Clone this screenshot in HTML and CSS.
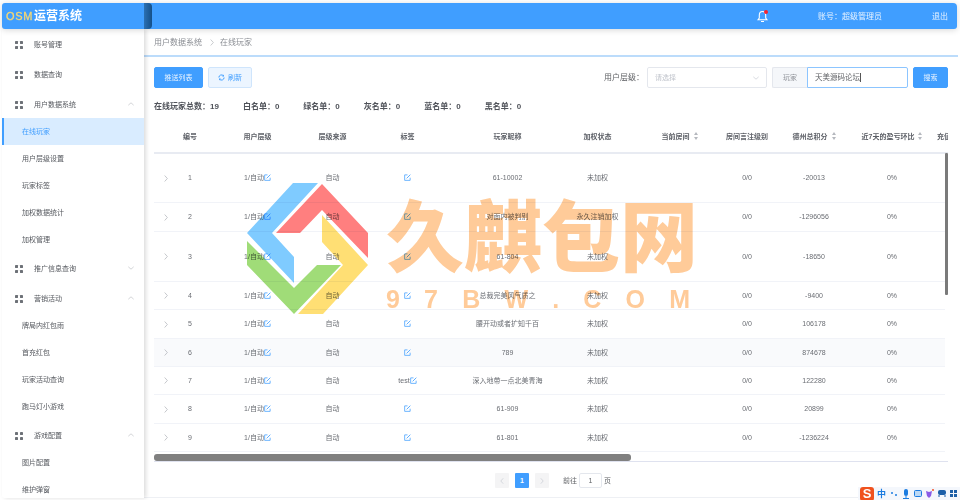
FILE: index.html
```html
<!DOCTYPE html>
<html lang="zh-CN">
<head>
<meta charset="utf-8">
<title>OSM 运营系统</title>
<link rel="stylesheet" href="styles.css">
</head>
<body>
<svg class="defs" width="0" height="0" aria-hidden="true">
  <symbol id="edit" viewBox="0 0 16 16">
    <path d="M14 8.500V14.500H1.500V2h6.500" fill="none" stroke="currentColor" stroke-width="2"/>
    <path d="M6 10 14.500 1.500" fill="none" stroke="currentColor" stroke-width="2.200"/>
  </symbol>
  <symbol id="grid" viewBox="0 0 8 8">
    <rect x="0" y="0" width="3" height="3" rx=".4"/><rect x="5" y="0" width="3" height="3" rx=".4"/>
    <rect x="0" y="5" width="3" height="3" rx=".4"/><rect x="5" y="5" width="3" height="3" rx=".4"/>
  </symbol>
  <symbol id="up" viewBox="0 0 10 6"><path d="M.5 5 5 1l4.500 4" fill="none" stroke="currentColor" stroke-width="1"/></symbol>
  <symbol id="down" viewBox="0 0 10 6"><path d="M.5 1 5 5l4.500-4" fill="none" stroke="currentColor" stroke-width="1"/></symbol>
  <symbol id="right" viewBox="0 0 6 10"><path d="M1 .5 5 5 1 9.500" fill="none" stroke="currentColor" stroke-width="1"/></symbol>
  <symbol id="left" viewBox="0 0 6 10"><path d="M5 .5 1 5l4 4.500" fill="none" stroke="currentColor" stroke-width="1"/></symbol>
</svg>

<div class="app">
  <header class="topbar">
    <div class="brand"><span class="brand-en">OSM</span><span class="brand-cn">运营系统</span></div>
    <div class="collapse-tab"></div>
    <div class="top-right">
      <span class="bell">
        <svg width="11" height="13" viewBox="0 0 11 13"><path d="M5.500 1.500C3.300 1.500 2.300 3.200 2.300 5.200V8L1 9.800h9L8.700 8V5.200C8.700 3.200 7.700 1.500 5.500 1.500Z" fill="none" stroke="#fff" stroke-width="1.100"/><path d="M4 11h3v1H4z" fill="#fff"/></svg>
        <i class="bell-dot"></i>
      </span>
      <span class="account">账号：超级管理员</span>
      <span class="logout">退出</span>
    </div>
  </header>

  <div class="body">
    <aside class="sidebar">
      <div class="group"><svg class="grid"><use href="#grid"/></svg>账号管理</div>
      <div class="group"><svg class="grid"><use href="#grid"/></svg>数据查询</div>
      <div class="group"><svg class="grid"><use href="#grid"/></svg>用户数据系统<svg class="chev"><use href="#up"/></svg></div>
      <div class="sub-list">
        <div class="sub active">在线玩家</div>
        <div class="sub">用户层级设置</div>
        <div class="sub">玩家标签</div>
        <div class="sub">加权数据统计</div>
        <div class="sub">加权管理</div>
      </div>
      <div class="group"><svg class="grid"><use href="#grid"/></svg>推广信息查询<svg class="chev"><use href="#down"/></svg></div>
      <div class="group"><svg class="grid"><use href="#grid"/></svg>营销活动<svg class="chev"><use href="#up"/></svg></div>
      <div class="sub-list">
        <div class="sub">牌局内红包雨</div>
        <div class="sub">首充红包</div>
        <div class="sub">玩家活动查询</div>
        <div class="sub">跑马灯小游戏</div>
      </div>
      <div class="group"><svg class="grid"><use href="#grid"/></svg>游戏配置<svg class="chev"><use href="#up"/></svg></div>
      <div class="sub-list">
        <div class="sub">图片配置</div>
        <div class="sub">维护弹窗</div>
      </div>
    </aside>

    <main class="main">
      <nav class="crumbs"><span>用户数据系统</span><svg class="crumb-sep"><use href="#right"/></svg><span>在线玩家</span></nav>

      <section class="content">
        <div class="toolbar">
          <button class="btn btn-primary btn-push">推送列表</button>
          <button class="btn btn-plain">
            <svg class="refresh" viewBox="0 0 8 8"><path d="M1 4a3 3 0 0 1 5.200-2M7 4a3 3 0 0 1-5.200 2" fill="none" stroke="currentColor" stroke-width="1.100"/><path d="M6.800.6v2.200H4.700M1.200 7.400V5.200h2.100" fill="currentColor"/></svg>刷新
          </button>
          <div class="filters">
            <span class="filter-label">用户层级：</span>
            <div class="select"><span>请选择</span><svg class="select-arrow"><use href="#down"/></svg></div>
            <div class="input-group">
              <span class="prepend">玩家</span>
              <span class="input">天美源码论坛<i class="cursor"></i></span>
            </div>
            <button class="btn btn-primary btn-search">搜索</button>
          </div>
        </div>

        <div class="stats">
          <span>在线玩家总数：19</span>
          <span>白名单：0</span>
          <span>绿名单：0</span>
          <span>灰名单：0</span>
          <span>蓝名单：0</span>
          <span>黑名单：0</span>
        </div>

        <div class="table-wrap">
          <table class="table">
            <colgroup>
              <col class="c-expand"><col class="c-id"><col class="c-75"><col class="c-75"><col class="c-75"><col class="c-nick"><col class="c-state"><col class="c-room"><col class="c-bet"><col class="c-score"><col class="c-ratio"><col class="c-last">
            </colgroup>
            <thead>
              <tr>
                <th></th><th class="cell-id">编号</th><th>用户层级</th><th>层级来源</th><th>标签</th><th>玩家昵称</th><th>加权状态</th>
                <th class="cell-room">当前房间<i class="sort"></i></th><th>房间言注级别</th><th>德州总积分<i class="sort"></i></th><th>近7天的盈亏环比<i class="sort"></i></th><th>充值金额</th>
              </tr>
            </thead>
            <tbody>
              <tr class="h49"><td class="arrow"><svg class="expand"><use href="#right"/></svg></td><td class="cell-id">1</td><td>1/自动<svg class="edit"><use href="#edit"/></svg></td><td>自动</td><td><svg class="edit"><use href="#edit"/></svg></td><td>61-10002</td><td>未加权</td><td></td><td>0/0</td><td>-20013</td><td>0%</td><td></td></tr>
              <tr class="h29"><td class="arrow"><svg class="expand"><use href="#right"/></svg></td><td class="cell-id">2</td><td>1/自动<svg class="edit"><use href="#edit"/></svg></td><td>自动</td><td><svg class="edit"><use href="#edit"/></svg></td><td>对面内被判别</td><td>永久注销加权</td><td></td><td>0/0</td><td>-1296056</td><td>0%</td><td></td></tr>
              <tr class="h50"><td class="arrow"><svg class="expand"><use href="#right"/></svg></td><td class="cell-id">3</td><td>1/自动<svg class="edit"><use href="#edit"/></svg></td><td>自动</td><td><svg class="edit"><use href="#edit"/></svg></td><td>61-804</td><td>未加权</td><td></td><td>0/0</td><td>-18650</td><td>0%</td><td></td></tr>
              <tr class="h28"><td class="arrow"><svg class="expand"><use href="#right"/></svg></td><td class="cell-id">4</td><td>1/自动<svg class="edit"><use href="#edit"/></svg></td><td>自动</td><td><svg class="edit"><use href="#edit"/></svg></td><td>总裁完美风气质之</td><td>未加权</td><td></td><td>0/0</td><td>-9400</td><td>0%</td><td></td></tr>
              <tr class="h29"><td class="arrow"><svg class="expand"><use href="#right"/></svg></td><td class="cell-id">5</td><td>1/自动<svg class="edit"><use href="#edit"/></svg></td><td>自动</td><td><svg class="edit"><use href="#edit"/></svg></td><td>腰开动或者扩知千百</td><td>未加权</td><td></td><td>0/0</td><td>106178</td><td>0%</td><td></td></tr>
              <tr class="h28 hover"><td class="arrow"><svg class="expand"><use href="#right"/></svg></td><td class="cell-id">6</td><td>1/自动<svg class="edit"><use href="#edit"/></svg></td><td>自动</td><td><svg class="edit"><use href="#edit"/></svg></td><td>789</td><td>未加权</td><td></td><td>0/0</td><td>874678</td><td>0%</td><td></td></tr>
              <tr class="h28"><td class="arrow"><svg class="expand"><use href="#right"/></svg></td><td class="cell-id">7</td><td>1/自动<svg class="edit"><use href="#edit"/></svg></td><td>自动</td><td>test<svg class="edit"><use href="#edit"/></svg></td><td>深入地带一点北美青海</td><td>未加权</td><td></td><td>0/0</td><td>122280</td><td>0%</td><td></td></tr>
              <tr class="h29"><td class="arrow"><svg class="expand"><use href="#right"/></svg></td><td class="cell-id">8</td><td>1/自动<svg class="edit"><use href="#edit"/></svg></td><td>自动</td><td><svg class="edit"><use href="#edit"/></svg></td><td>61-909</td><td>未加权</td><td></td><td>0/0</td><td>20899</td><td>0%</td><td></td></tr>
              <tr class="h28"><td class="arrow"><svg class="expand"><use href="#right"/></svg></td><td class="cell-id">9</td><td>1/自动<svg class="edit"><use href="#edit"/></svg></td><td>自动</td><td><svg class="edit"><use href="#edit"/></svg></td><td>61-801</td><td>未加权</td><td></td><td>0/0</td><td>-1236224</td><td>0%</td><td></td></tr>
            </tbody>
          </table>
          <div class="v-scroll"><div class="v-thumb"></div></div>
        </div>
        <div class="h-scroll"><div class="h-thumb"></div></div>

        <div class="pager">
          <span class="page-btn"><svg class="page-arrow"><use href="#left"/></svg></span>
          <span class="page-btn current">1</span>
          <span class="page-btn"><svg class="page-arrow"><use href="#right"/></svg></span>
          <span class="goto">前往</span><span class="goto-input">1</span><span class="goto-unit">页</span>
        </div>
      </section>
    </main>
  </div>

  <div class="watermark">
    <svg class="wm-logo" width="122" height="132" viewBox="247 183 122 132">
      <polygon fill="#7fcbff" points="293,183 318,183 272,233 294,257 294,283 247,233"/>
      <polygon fill="#ff7f7f" points="322,184 368,233 368,258 322,210 300,233 276,233"/>
      <polygon fill="#ffdf74" points="322,215 368,265 323,314 298,314 343,265 322,242"/>
      <polygon fill="#a0dc78" points="247,241 294,288 317,265 341,265 294,314 247,265"/>
    </svg>
    <div class="wm-text">
      <div class="wm-cn">久麒包网</div>
      <div class="wm-en"><span>9</span><span>7</span><span>B</span><span>W</span><span>.</span><span>C</span><span>O</span><span>M</span></div>
    </div>
  </div>

  <div class="tray">
    <span class="tray-s">S</span>
    <span class="tray-zh">中</span>
    <svg class="tray-icons" width="70" height="10" viewBox="0 0 70 10">
      <circle cx="3" cy="4" r="1" fill="#1c7ce0"/><circle cx="7" cy="6" r="1" fill="#1c7ce0"/>
      <rect x="15" y="0" width="4" height="7" rx="2" fill="#1c7ce0"/><path d="M17 7v3M14 9.500h6" stroke="#1c7ce0" fill="none"/>
      <rect x="25.500" y="1.500" width="7" height="6" rx="1" fill="#bcd9f5" stroke="#1c7ce0"/>
      <path d="M37 2l3 1 3-1-1 5-2 2-2-2Z" fill="#8a5ce6"/><circle cx="44" cy="1" r="1" fill="#f0522a"/>
      <rect x="49" y="1" width="8" height="5" rx="2" fill="#1c5fa8"/><path d="M50 6v2M56 6v2" stroke="#1c5fa8"/>
      <rect x="61" y="1" width="3" height="3" fill="#1c5fa8"/><rect x="65" y="1" width="3" height="3" fill="#1c5fa8"/>
      <rect x="61" y="5" width="3" height="3" fill="#1c5fa8"/><rect x="65" y="5" width="3" height="3" fill="#1c5fa8"/>
    </svg>
  </div>
</div>
</body>
</html>
```
FILE: styles.css
```css
* { box-sizing: border-box; }
html, body { margin: 0; height: 100%; overflow: hidden; background: #fff; }
body { font-family: "Liberation Sans", "Noto Sans CJK SC", sans-serif; color: #606266; font-size: 7px; line-height: 10px; }
.defs { display: block; height: 0; }
.app { position: relative; width: 960px; height: 500px; padding: 3px 2px 1px; filter: blur(.35px); overflow: hidden; }

/* top bar */
.topbar { display: flex; align-items: center; width: 955px; height: 26px; background: #409eff; border-radius: 3px 4px 3px 3px; box-shadow: 0 1px 6px rgba(0,0,0,.16); position: relative; z-index: 2; }
.brand { width: 142px; display: flex; align-items: center; padding: 0 0 1px 4px; line-height: 14px; }
.brand-en { font-size: 11px; color: #f7d774; -webkit-text-stroke: .3px #f7d774; letter-spacing: .7px; width: 28px; }
.brand-cn { font-size: 12px; font-weight: 700; color: #fff; }
.collapse-tab { width: 8px; height: 26px; background: linear-gradient(90deg, #2b70b3, #155089); border-radius: 0 4px 4px 0; }
.top-right { margin-left: auto; display: flex; align-items: center; padding-top: 2px; color: #e6f2ff; font-size: 8px; }
.bell { position: relative; display: flex; width: 11px; height: 13px; margin: -2px 50px 0 0; }
.bell-dot { position: absolute; top: 0; right: 0; width: 4px; height: 4px; border-radius: 50%; background: #f5222d; }
.account { margin-right: 50px; }
.logout { margin-right: 9px; }

/* body */
.body { display: flex; height: 470px; }
.sidebar { width: 142px; height: 469px; overflow: hidden; background: #fff; box-shadow: 2px 0 4px rgba(0,0,0,.14); border-radius: 0 0 0 3px; position: relative; z-index: 1; flex: none; color: #55585e; }
.group { position: relative; display: flex; align-items: center; height: 30px; padding: 1px 0 0 13px; }
.grid { width: 8px; height: 8px; fill: #6d7177; margin-right: 11px; flex: none; }
.chev { position: absolute; left: 126px; top: 13px; width: 6px; height: 4px; color: #b5b8be; }
.sub-list { margin-top: -1px; }
.sub { display: flex; align-items: center; height: 27px; padding: 1px 0 0 20px; }
.sub.active { background: #d9ecff; color: #409eff; border-left: 2px solid #409eff; padding-left: 18px; }

/* main */
.main { flex: 1; min-width: 0; border-bottom: 1px solid #eef0f4; height: 469px; }
.crumbs { display: flex; align-items: center; height: 28px; padding: 1px 0 0 10px; border-bottom: 2px solid #bcdcfb; font-size: 8px; color: #8a8d93; }
.crumb-sep { width: 4px; height: 7px; margin: 0 6px 0 8px; color: #b0b3b8; }
.content { padding: 10px 0 0 10px; width: 804px; }
.toolbar { display: flex; align-items: center; height: 21px; }
.btn { font: inherit; height: 21px; border-radius: 2px; border: 1px solid #409eff; padding: 0; display: flex; align-items: center; justify-content: center; }
.btn-primary { background: #409eff; color: #e8f3ff; }
.btn-push { width: 49px; margin-right: 5px; }
.btn-plain { width: 44px; background: #ecf5ff; border-color: #cfe5fc; color: #409eff; }
.refresh { width: 7px; height: 7px; margin-right: 3px; }
.btn-search { width: 35px; }
.filters { margin-left: auto; display: flex; align-items: center; }
.filter-label { font-size: 8px; margin-right: 3px; color: #606266; }
.select { width: 120px; height: 21px; border: 1px solid #e4e7ed; border-radius: 2px; margin-right: 5px; display: flex; align-items: center; justify-content: space-between; padding: 0 7px; color: #c0c4cc; }
.select-arrow { width: 6px; height: 4px; color: #c0c4cc; }
.input-group { display: flex; height: 21px; margin-right: 5px; }
.prepend { width: 35px; background: #f5f7fa; border: 1px solid #e4e7ed; border-right: 0; border-radius: 2px 0 0 2px; display: flex; align-items: center; justify-content: center; color: #909399; }
.input { width: 101px; border: 1px solid #8cc5ff; border-radius: 0 2px 2px 0; display: flex; align-items: center; padding-left: 7px; color: #606266; font-size: 7.500px; }
.cursor { display: inline-block; width: 1px; height: 9px; background: #555; }
.stats { display: flex; gap: 24px; margin-top: 13px; height: 12px; line-height: 12px; font-size: 8px; font-weight: 700; color: #50535a; }

/* table */
.table-wrap { position: relative; width: 794px; height: 332px; margin-top: 7px; overflow: hidden; }
.table { table-layout: fixed; width: 820px; border-collapse: collapse; }
.c-expand { width: 24px; } .c-id { width: 42px; } .c-75 { width: 75px; } .c-nick { width: 125px; }
.c-state { width: 55px; } .c-room { width: 97px; } .c-bet { width: 50px; } .c-score { width: 84px; }
.c-ratio { width: 72px; } .c-last { width: 46px; }
th, td { padding: 1px 0 0; text-align: center; white-space: nowrap; font-weight: 400; }
thead tr { height: 33px; }
th { font-weight: 700; color: #5c5f66; border-bottom: 2px solid #e8ebf2; }
td { border-bottom: 1px solid #f1f3f8; color: #6a6d73; }
.cell-id { padding-right: 18px; }
.cell-room { padding-left: 12px; }
.arrow { color: #a9acb2; }
.expand { width: 4px; height: 7px; display: block; margin: 0 auto; }
.edit { width: 7px; height: 7px; color: #5aabff; vertical-align: -1px; }
.h49 { height: 49px; } .h50 { height: 50px; } .h29 { height: 29px; } .h28 { height: 28px; }
tr.hover td { background: #f9fafc; }
.sort { display: inline-block; position: relative; width: 4px; height: 8px; margin-left: 4px; vertical-align: -1px; }
.sort::before, .sort::after { content: ""; position: absolute; left: 0; border-left: 2px solid transparent; border-right: 2px solid transparent; }
.sort::before { top: 0; border-bottom: 3px solid #b5b8be; }
.sort::after { bottom: 0; border-top: 3px solid #b5b8be; }
.v-scroll { position: absolute; right: 0; top: 33px; bottom: 0; width: 3px; background: #fff; }
.v-thumb { width: 3px; height: 142px; background: #7a7a7a; border-radius: 1px; }
.h-scroll { width: 794px; height: 8px; margin-top: 2px; border-bottom: 1px solid #dfe2ef; }
.h-thumb { width: 477px; height: 7px; background: #808080; border-radius: 3px; }

/* pager */
.pager { display: flex; align-items: center; margin-top: 11px; padding-left: 341px; height: 15px; font-size: 7px; }
.page-btn { width: 14px; height: 15px; margin-right: 6px; background: #f4f4f5; border-radius: 1px; display: flex; align-items: center; justify-content: center; color: #c0c4cc; }
.page-btn.current { background: #409eff; color: #fff; font-weight: 700; }
.page-arrow { width: 4px; height: 6px; }
.goto { margin-left: 8px; margin-right: 2px; }
.goto-input { width: 23px; height: 15px; border: 1px solid #e4e7ed; border-radius: 2px; display: flex; align-items: center; justify-content: center; margin-right: 2px; }

/* watermark */
.watermark { position: absolute; left: 247px; top: 183px; width: 450px; height: 132px; display: flex; mix-blend-mode: multiply; pointer-events: none; z-index: 5; }
.wm-logo { flex: none; display: block; }
.wm-text { margin-left: 17px; width: 304px; }
.wm-cn { font-family: "Noto Sans CJK SC", sans-serif; font-weight: 900; font-size: 78px; line-height: 98px; color: #ffcb99; white-space: nowrap; }
.wm-en { display: flex; justify-content: space-between; margin-top: 4px; font-family: "Liberation Sans", sans-serif; font-weight: 700; font-size: 25px; line-height: 28px; color: #ffcb99; }

/* ime tray */
.tray { position: absolute; left: 858px; top: 487px; width: 102px; height: 13px; background: #f4f7fc; display: flex; align-items: center; z-index: 6; }
.tray-s { width: 14px; height: 14px; margin-left: 2px; background: #f0521e; color: #fff; font-weight: 700; font-size: 13px; line-height: 14px; text-align: center; border-radius: 3px; flex: none; }
.tray-zh { width: 15px; font-size: 9px; font-weight: 700; color: #1c7ce0; text-align: center; flex: none; }
.tray-icons { flex: none; }
```
